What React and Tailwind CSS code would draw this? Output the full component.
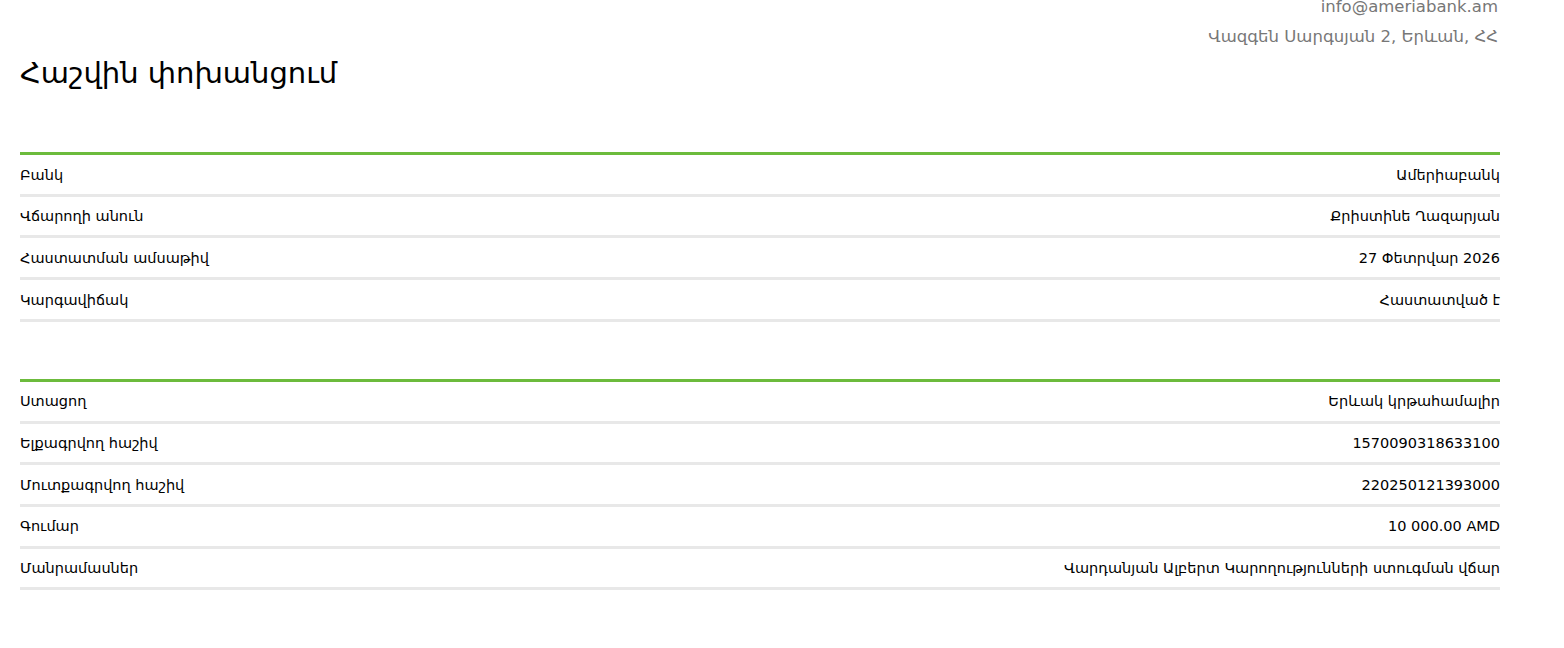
export default function App() {
  const sec1 = [
    ["Բանկ", "Ամերիաբանկ"],
    ["Վճարողի անուն", "Քրիստինե Ղազարյան"],
    ["Հաստատման ամսաթիվ", "27 Փետրվար 2026"],
    ["Կարգավիճակ", "Հաստատված է"],
  ];
  const sec2 = [
    ["Ստացող", "Երևակ կրթահամալիր"],
    ["Ելքագրվող հաշիվ", "1570090318633100"],
    ["Մուտքագրվող հաշիվ", "220250121393000"],
    ["Գումար", "10 000.00 AMD"],
    ["Մանրամասներ", "Վարդանյան Ալբերտ Կարողությունների ստուգման վճար"],
  ];
  const Section = ({ rows, className }) => (
    <div className={"border-t-[3px] border-[#6cbb3c] " + className}>
      {rows.map(([k, v]) => (
        <div key={k} className="flex justify-between pt-[11.5px] pb-[10.5px] border-b-[3px] border-[#e8e8e8] text-[14.5px] leading-[16.7px] text-black">
          <span>{k}</span>
          <span>{v}</span>
        </div>
      ))}
    </div>
  );
  return (
    <div className="bg-white min-h-[648px] overflow-hidden" style={{ fontFamily: '"DejaVu Sans", sans-serif' }}>
      <div className="w-[1480px] ml-[20px]">
        <div className="text-right pr-[2px] text-[16.5px] leading-[30px] text-[#777777] -mt-[8px]">
          <div>info@ameriabank.am</div>
          <div>Վազգեն Սարգսյան 2, Երևան, ՀՀ</div>
        </div>
        <h1 className="text-[29px] leading-[34px] text-black mt-[4px]">Հաշվին փոխանցում</h1>
        <Section rows={sec1} className="mt-[62px]" />
        <Section rows={sec2} className="mt-[57px]" />
      </div>
    </div>
  );
}
